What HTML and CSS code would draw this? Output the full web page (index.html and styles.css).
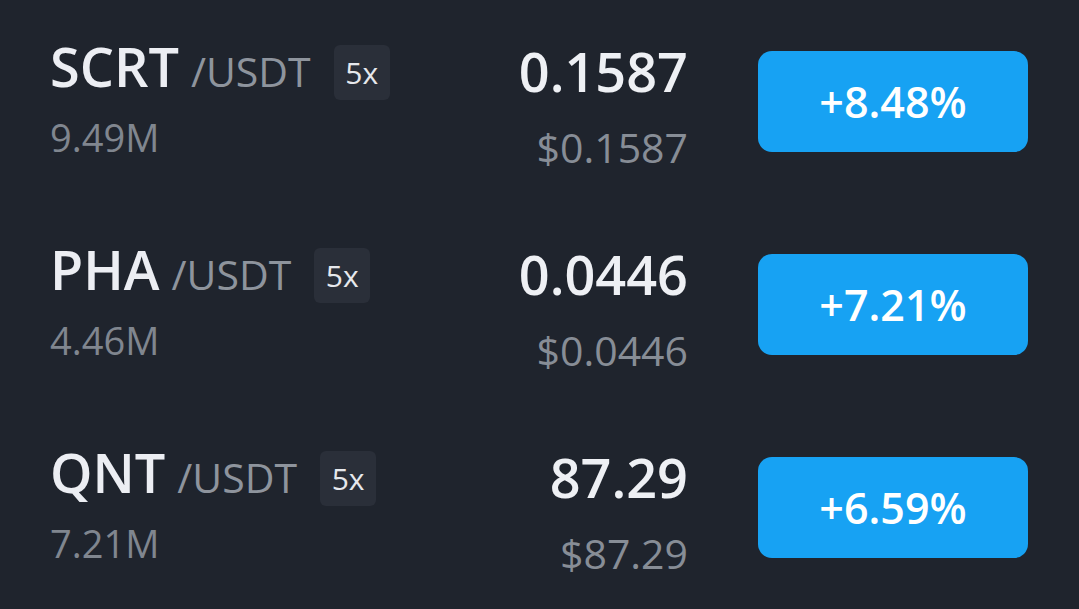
FILE: index.html
```html
<!DOCTYPE html>
<html lang="en">
  <head>
    <meta charset="UTF-8" />
    <meta name="viewport" content="width=device-width, initial-scale=1.0" />
    <title>Gainers</title>
    <link rel="stylesheet" href="styles.css">
  </head>
  <body>
    <div class="market-list">
      <div class="market-row">
        <div class="pair-info">
          <div class="pair-line">
            <span class="pair-base">SCRT</span>
            <span class="pair-quote">/USDT</span>
            <span class="leverage">5x</span>
          </div>
          <div class="pair-volume">9.49M</div>
        </div>
        <div class="price-info">
          <div class="price-last">0.1587</div>
          <div class="price-fiat">$0.1587</div>
        </div>
        <div class="change-btn">+8.48%</div>
      </div>

      <div class="market-row">
        <div class="pair-info">
          <div class="pair-line">
            <span class="pair-base">PHA</span>
            <span class="pair-quote">/USDT</span>
            <span class="leverage">5x</span>
          </div>
          <div class="pair-volume">4.46M</div>
        </div>
        <div class="price-info">
          <div class="price-last">0.0446</div>
          <div class="price-fiat">$0.0446</div>
        </div>
        <div class="change-btn">+7.21%</div>
      </div>

      <div class="market-row">
        <div class="pair-info">
          <div class="pair-line">
            <span class="pair-base">QNT</span>
            <span class="pair-quote">/USDT</span>
            <span class="leverage">5x</span>
          </div>
          <div class="pair-volume">7.21M</div>
        </div>
        <div class="price-info">
          <div class="price-last">87.29</div>
          <div class="price-fiat">$87.29</div>
        </div>
        <div class="change-btn">+6.59%</div>
      </div>
    </div>
  </body>
</html>
```

FILE: styles.css
```css
/* reset */
* {
  margin: 0;
  padding: 0;
  box-sizing: border-box;
  font-family: "Open Sans", "Noto Sans", sans-serif;
}

body {
  background-color: #1f242d;
  width: 1079px;
  height: 609px;
  overflow: hidden;
}

.market-row {
  display: flex;
  align-items: flex-start;
  height: 203px;
  padding: 39px 51px 0 50px;
}

.pair-info {
  flex: 1;
}

.pair-line {
  display: flex;
  align-items: baseline;
  height: 54px;
}

.pair-base {
  font-size: 54px;
  line-height: 54px;
  font-weight: 600;
  color: #eceef3;
}

.pair-quote {
  margin-left: 12px;
  font-size: 41px;
  line-height: 54px;
  color: #8e949d;
}

.leverage {
  align-self: flex-start;
  margin-top: 6px;
  margin-left: 23px;
  width: 56px;
  height: 55px;
  border-radius: 6px;
  background-color: #2a2f39;
  color: #e6e8ec;
  font-size: 30px;
  line-height: 55px;
  text-align: center;
}

.pair-volume {
  margin-top: 25px;
  font-size: 38px;
  line-height: 38px;
  color: #80868f;
}

.price-info {
  margin-top: 5px;
  text-align: right;
}

.price-last {
  font-size: 54px;
  line-height: 54px;
  font-weight: 600;
  color: #eef0f4;
}

.price-fiat {
  margin-top: 28px;
  font-size: 41px;
  line-height: 42px;
  color: #878d96;
}

.change-btn {
  margin-top: 12px;
  margin-left: 70px;
  width: 270px;
  height: 101px;
  border-radius: 14px;
  background-color: #17a2f3;
  color: #ffffff;
  font-size: 43px;
  font-weight: 600;
  line-height: 101px;
  text-align: center;
}
```
